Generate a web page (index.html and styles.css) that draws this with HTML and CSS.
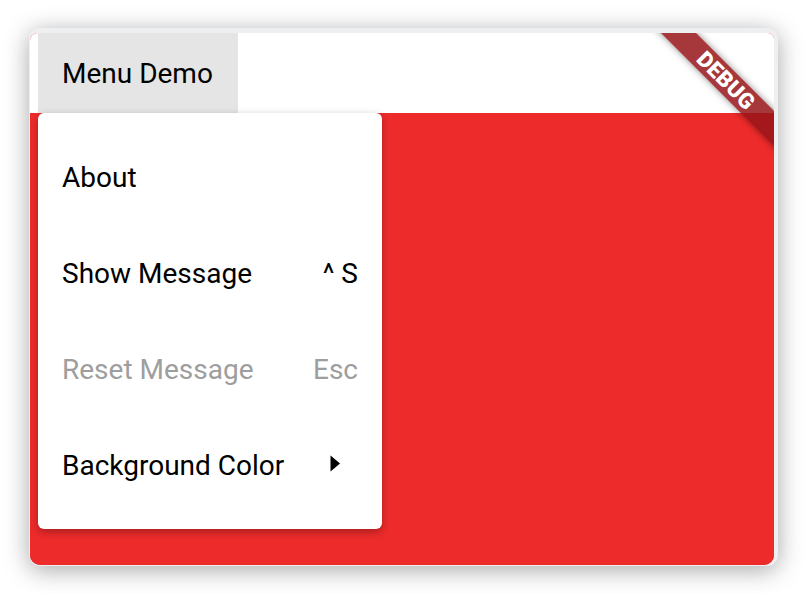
FILE: index.html
```html
<!DOCTYPE html>
<html>
<head>
<meta charset="utf-8">
<link rel="stylesheet" href="styles.css">
</head>
<body>
<div class="stage">
  <div class="window">
    <div class="content">
      <div class="menubar">
        <div class="menubtn">Menu Demo</div>
      </div>
      <div class="canvas"></div>
      <div class="menu">
        <div class="item"><span>About</span></div>
        <div class="item"><span>Show Message</span><span class="shortcut">^ S</span></div>
        <div class="item disabled"><span>Reset Message</span><span class="shortcut">Esc</span></div>
        <div class="item"><span>Background Color</span>
          <svg class="arrow" width="11" height="17" viewBox="0 0 11 17"><path d="M0.5 0.5 L10 8.5 L0.5 16.5 Z" fill="#000"/></svg>
        </div>
      </div>
      <div class="banner">DEBUG</div>
    </div>
  </div>
</div>
</body>
</html>
```
FILE: styles.css
```css
html, body {
  margin: 0;
  padding: 0;
  background: #ffffff;
}
body {
  font-family: Roboto, "Liberation Sans", sans-serif;
}
.stage {
  height: 594px;
  box-sizing: border-box;
  padding: 28px 28px 0 29px;
}
.window {
  width: 749px;
  height: 538px;
  box-sizing: border-box;
  padding: 5px 4px 1px 1px;
  background: #eeeff1;
  border-radius: 11px;
  box-shadow: 0 4px 24px rgba(0, 0, 0, 0.35);
}
.content {
  position: relative;
  width: 744px;
  height: 532px;
  border-radius: 8px 6px 10px 10px;
  overflow: hidden;
  display: flex;
  flex-direction: column;
  background: #ee2b2b;
}
.menubar {
  height: 80px;
  background: #ffffff;
  padding-left: 8px;
  display: flex;
}
.menubtn {
  width: 200px;
  box-sizing: border-box;
  padding-left: 24px;
  background: #e5e5e5;
  display: flex;
  align-items: center;
  font-size: 28px;
  color: #000;
}
.canvas {
  flex: 1;
  background: #ee2b2b;
}
.menu {
  position: absolute;
  left: 8px;
  top: 80px;
  width: 344px;
  box-sizing: border-box;
  padding: 16px 0;
  background: #ffffff;
  border-radius: 6px;
  box-shadow: 0 3px 8px rgba(0, 0, 0, 0.3);
}
.item {
  height: 96px;
  box-sizing: border-box;
  padding: 0 24px;
  display: flex;
  align-items: center;
  justify-content: space-between;
  font-size: 28px;
  color: #000;
}
.item.disabled {
  color: #9e9e9e;
}
.arrow {
  margin-right: 17px;
  margin-top: -4px;
}
.banner {
  position: absolute;
  left: 596px;
  top: 35px;
  width: 200px;
  height: 25px;
  line-height: 25px;
  text-align: center;
  transform: rotate(45deg);
  background: rgba(150, 20, 25, 0.85);
  box-shadow: 0 0 7px rgba(0, 0, 0, 0.45);
  color: #ffffff;
  font-weight: 900;
  font-size: 22px;
  letter-spacing: 0.3px;
}
```
